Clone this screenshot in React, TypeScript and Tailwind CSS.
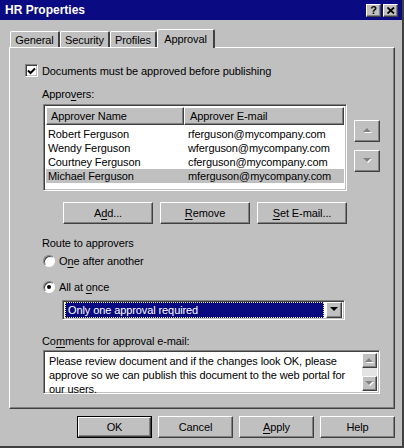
import type { ReactNode } from "react";

const FONT = "font-['Liberation_Sans',Arial,sans-serif]";

const RAISED =
  "border border-t-white border-l-white border-r-[#404040] border-b-[#404040] shadow-[inset_-1px_-1px_0_#808080]";
const SUNKEN =
  "border border-t-[#808080] border-l-[#808080] border-r-white border-b-white shadow-[inset_1px_1px_0_#404040,inset_-1px_-1px_0_#c0c0c0]";

const TXT = "text-[11px] tracking-[-0.1px] leading-[14px]";

function U({ children }: { children: ReactNode }) {
  return <span className="underline underline-offset-[2px] decoration-1">{children}</span>;
}

function Arrow({ dir, disabled }: { dir: "up" | "down"; disabled?: boolean }) {
  const pts = dir === "up" ? "0,4 4,0 8,4" : "0,0 8,0 4,4";
  return (
    <svg width="9" height="6" viewBox="0 0 9 6">
      {disabled && <polygon points={pts} fill="#ffffff" transform="translate(1 1)" />}
      <polygon points={pts} fill={disabled ? "#808080" : "#000000"} />
    </svg>
  );
}

function PushButton({ children, w, def }: { children: ReactNode; w: string; def?: boolean }) {
  const inner = (
    <div className={`${RAISED} ${TXT} flex items-center justify-center h-full w-full bg-[#c0c0c0] text-black`}>
      {children}
    </div>
  );
  return def ? (
    <div className={`${w} h-[22px] border border-black`}>{inner}</div>
  ) : (
    <div className={`${w} h-[22px]`}>{inner}</div>
  );
}

function Radio({ checked, children }: { checked?: boolean; children: ReactNode }) {
  return (
    <div className="flex items-center gap-[4px] h-[14px] ml-[33px]">
      <div className="w-[12px] h-[12px] rounded-full bg-white border border-t-[#808080] border-l-[#808080] border-b-white border-r-white shadow-[inset_1px_1px_0_#404040] flex items-center justify-center">
        {checked && <div className="w-[4px] h-[4px] rounded-full bg-black" />}
      </div>
      <span className={TXT}>{children}</span>
    </div>
  );
}

const approvers = [
  { name: "Robert Ferguson", email: "rferguson@mycompany.com" },
  { name: "Wendy Ferguson", email: "wferguson@mycompany.com" },
  { name: "Courtney Ferguson", email: "cferguson@mycompany.com" },
  { name: "Michael Ferguson", email: "mferguson@mycompany.com", selected: true },
];

const tabs = [
  { label: "General", w: "w-[50px]" },
  { label: "Security", w: "w-[50px]" },
  { label: "Profiles", w: "w-[47px]" },
];

export default function App() {
  return (
    <div className={`${FONT} w-[404px] h-[448px] bg-[#c0c0c0] text-black border-r-2 border-b-2 border-r-[#404040] border-b-[#404040] overflow-hidden select-none`}>
      {/* title bar */}
      <div className="h-[20px] bg-[#0a0a82] flex items-center pl-[5px] pr-[4px]">
        <span className="text-white font-bold text-[12px] flex-1">HR Properties</span>
        <div className="flex gap-[2px]">
          <div className={`${RAISED} w-[15px] h-[13px] bg-[#c0c0c0] flex items-center justify-center text-[11px] font-bold leading-none`}>
            ?
          </div>
          <div className={`${RAISED} w-[15px] h-[13px] bg-[#c0c0c0] flex items-center justify-center`}>
            <svg width="8" height="7" viewBox="0 0 8 7">
              <path d="M0.5 0.5 L7 6.5 M7 0.5 L0.5 6.5" stroke="#000" strokeWidth="1.8" />
            </svg>
          </div>
        </div>
      </div>

      {/* tabs */}
      <div className="flex items-end h-[18px] mt-[9px] ml-[10px]">
        {tabs.map((t) => (
          <div
            key={t.label}
            className={`${t.w} ${TXT} h-[16px] border-t border-l border-t-white border-l-white border-r-2 border-r-[#404040] rounded-t-[2px] flex items-center justify-center`}
          >
            {t.label}
          </div>
        ))}
        <div className={`${TXT} w-[58px] h-[19px] -mb-[1px] bg-[#c0c0c0] border-t border-l border-t-white border-l-white border-r-2 border-r-[#404040] rounded-t-[2px] flex items-start justify-center pt-[2px] relative z-10`}>
          Approval
        </div>
      </div>

      {/* panel */}
      <div className="ml-[9px] w-[386px] h-[362px] border border-t-white border-l-white border-r-[#404040] border-b-[#404040] shadow-[inset_-1px_-1px_0_#808080] flex flex-col">
        <div className="flex items-center gap-[4px] mt-[16px] ml-[15px] h-[13px]">
          <div className={`${SUNKEN} w-[13px] h-[13px] bg-white flex items-center justify-center`}>
            <svg width="9" height="8" viewBox="0 0 9 8">
              <path d="M1 3.5 L3.5 6 L8 1.5" fill="none" stroke="#000" strokeWidth="2" />
            </svg>
          </div>
          <span className={TXT}>Documents must be approved before publishing</span>
        </div>

        <div className={`${TXT} mt-[10px] ml-[32px]`}>
          Appro<U>v</U>ers:
        </div>

        <div className="flex mt-[3px] ml-[33px]">
          <div className={`${SUNKEN} w-[304px] h-[87px] bg-white p-[2px]`}>
            <div className="flex h-[18px] w-[298px]">
              <div className={`${RAISED} ${TXT} w-[138px] shrink-0 bg-[#c0c0c0] flex items-center pl-[4px]`}>
                Approver Name
              </div>
              <div className={`${RAISED} ${TXT} w-[160px] shrink-0 bg-[#c0c0c0] flex items-center pl-[5px]`}>
                Approver E-mail
              </div>
            </div>
            {approvers.map((a, i) => (
              <div
                key={a.email}
                className={`${TXT} flex h-[14px] w-[298px] items-center ${a.selected ? "bg-[#c0c0c0]" : ""} ${i === 0 ? "mt-[2px]" : ""}`}
              >
                <span className="w-[138px] shrink-0 pl-[2px]">{a.name}</span>
                <span className="pl-[4px] whitespace-nowrap">{a.email}</span>
              </div>
            ))}
          </div>
          <div className="flex flex-col ml-[7px]">
            <div className={`${RAISED} w-[26px] h-[22px] mt-[16px] flex items-center justify-center`}>
              <Arrow dir="up" disabled />
            </div>
            <div className={`${RAISED} w-[26px] h-[22px] mt-[8px] flex items-center justify-center`}>
              <Arrow dir="down" disabled />
            </div>
          </div>
        </div>

        <div className="flex gap-[7px] mt-[11px] ml-[53px]">
          <PushButton w="w-[90px]">
            A<U>d</U>d...
          </PushButton>
          <PushButton w="w-[90px]">
            <U>R</U>emove
          </PushButton>
          <PushButton w="w-[90px]">
            <U>S</U>et E-mail...
          </PushButton>
        </div>

        <div className={`${TXT} mt-[12px] ml-[32px]`}>Route to approvers</div>

        <div className="mt-[4px]">
          <Radio>
            O<U>n</U>e after another
          </Radio>
        </div>
        <div className="mt-[12px]">
          <Radio checked>
            All at <U>o</U>nce
          </Radio>
        </div>

        <div className={`${SUNKEN} mt-[6px] ml-[52px] w-[283px] h-[20px] bg-white flex items-center p-[2px]`}>
          <div className={`${TXT} flex-1 h-[16px] bg-[#0a0a80] border border-dotted border-[#e8e890] text-white pl-[2px]`}>
            Only one approval required
          </div>
          <div className={`${RAISED} ml-[2px] w-[16px] h-[16px] bg-[#c0c0c0] flex items-center justify-center`}>
            <Arrow dir="down" />
          </div>
        </div>

        <div className={`${TXT} mt-[14px] ml-[32px]`}>
          Co<U>m</U>ments for approval e-mail:
        </div>

        <div className={`${SUNKEN} mt-[2px] ml-[33px] w-[337px] h-[44px] bg-white flex p-[2px]`}>
          <div className={`${TXT} flex-1 pl-[3px] pr-[8px] pt-[1px]`}>
            Please review document and if the changes look OK, please approve so we can publish this document to the web portal for our users.
          </div>
          <div className="w-[15px] flex flex-col bg-[#e4e4e4]">
            <div className={`${RAISED} h-[15px] bg-[#c0c0c0] flex items-center justify-center`}>
              <Arrow dir="up" disabled />
            </div>
            <div className="flex-1" />
            <div className={`${RAISED} h-[15px] bg-[#c0c0c0] flex items-center justify-center`}>
              <Arrow dir="down" disabled />
            </div>
          </div>
        </div>
      </div>

      {/* dialog buttons */}
      <div className="flex gap-[6px] mt-[7px] ml-[77px]">
        <PushButton w="w-[75px]" def>
          OK
        </PushButton>
        <PushButton w="w-[75px]">Cancel</PushButton>
        <PushButton w="w-[75px]">
          <U>A</U>pply
        </PushButton>
        <PushButton w="w-[75px]">Help</PushButton>
      </div>
    </div>
  );
}
